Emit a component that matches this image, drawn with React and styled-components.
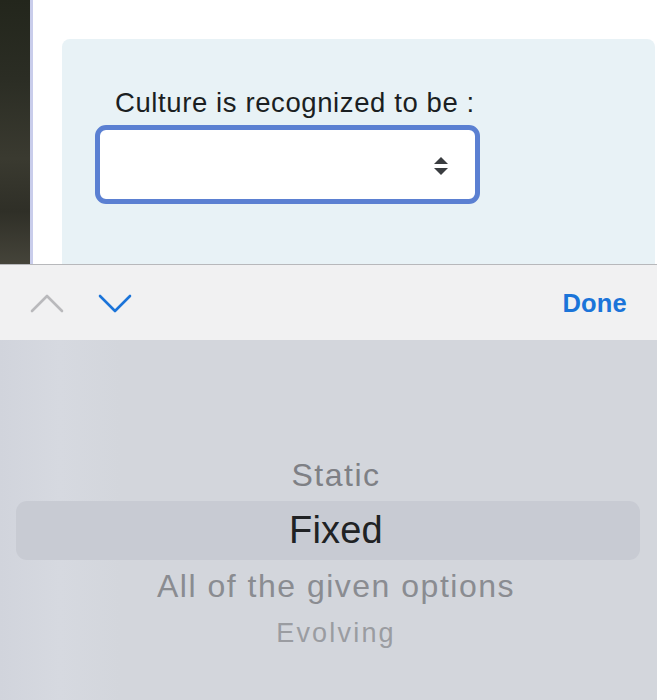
import React from "react";
import styled, { createGlobalStyle } from "styled-components";

const Global = createGlobalStyle`
  html, body { margin: 0; padding: 0; width: 657px; height: 700px; overflow: hidden; }
  body { font-family: "Liberation Sans", Arial, sans-serif; background: #fff; }
`;

const Screen = styled.div`
  width: 657px;
  height: 700px;
  display: flex;
  flex-direction: column;
  overflow: hidden;
`;

const WebArea = styled.div`
  height: 264px;
  display: flex;
  overflow: hidden;
  flex: none;
`;

const PhotoStrip = styled.div`
  width: 30px;
  flex: none;
  background: linear-gradient(180deg, #23261c 0%, #2b2d24 30%, #3a3a30 60%, #2f2f27 80%, #45443a 100%);
`;

const Rule = styled.div`
  width: 3px;
  flex: none;
  background: #c9cdeb;
`;

const Content = styled.div`
  flex: 1;
  background: #fff;
  padding: 39px 2px 0 29px;
`;

const Card = styled.div`
  background: #e8f2f6;
  border-radius: 8px 8px 0 0;
  height: 260px;
  padding: 48px 0 0 33px;
  box-sizing: border-box;
`;

const Label = styled.div`
  font-size: 27.5px;
  color: #1b1f22;
  line-height: 31px;
  margin-left: 20px;
  letter-spacing: 0.6px;
  white-space: nowrap;
`;

const Select = styled.div`
  margin-top: 7px;
  width: 385px;
  height: 79px;
  box-sizing: border-box;
  border: 5px solid #5b80d2;
  border-radius: 11px;
  background: #fff;
  display: flex;
  align-items: center;
  justify-content: flex-end;
  padding-right: 27px;
  padding-top: 2px;
`;

const AccessoryBar = styled.div`
  flex: none;
  height: 76px;
  background: #f1f1f2;
  border-top: 1px solid #b7b8bb;
  display: flex;
  align-items: center;
  padding: 2px 30px 0 30px;
  box-sizing: border-box;
`;

const NavButton = styled.div`
  display: flex;
  align-items: center;
  margin-top: -2px;
  margin-right: ${(p) => p.$gap || 0}px;
`;

const Done = styled.div`
  margin-left: auto;
  font-family: "Liberation Sans", Arial, sans-serif;
  font-weight: 700;
  font-size: 25.5px;
  color: #1b74d9;
  letter-spacing: 0.2px;
`;

const Picker = styled.div`
  flex: 1;
  background: linear-gradient(90deg, #d1d4dc 0px, #d6d9e0 60px, #d3d6dc 120px, #d3d6dc 100%);
  display: flex;
  flex-direction: column;
  align-items: stretch;
  padding: 110px 17px 0 16px;
`;

const Item = styled.div`
  text-align: center;
  font-family: "Liberation Sans", Arial, sans-serif;
  padding-left: 16px;
  font-size: ${(p) => p.$size}px;
  color: ${(p) => p.$color};
  height: ${(p) => p.$h}px;
  line-height: ${(p) => p.$h}px;
  letter-spacing: ${(p) => p.$ls || 0}px;
  white-space: nowrap;
`;

const Selected = styled(Item)`
  background: #c8cbd3;
  border-radius: 11px;
`;

const Chevron = ({ up, color }) => (
  <svg width="34" height="20" viewBox="0 0 34 20" fill="none">
    <path
      d={up ? "M2 18 L17 3 L32 18" : "M2 3 L17 18 L32 3"}
      stroke={color}
      strokeWidth="2.6"
      strokeLinecap="round"
      strokeLinejoin="round"
    />
  </svg>
);

const UpDown = () => (
  <svg width="14" height="20" viewBox="0 0 14 20">
    <path d="M7 1 L14 8 L0 8 Z" fill="#3a3d40" />
    <path d="M7 19 L14 12 L0 12 Z" fill="#3a3d40" />
  </svg>
);

export default function App() {
  return (
    <>
      <Global />
      <Screen>
        <WebArea>
          <PhotoStrip />
          <Rule />
          <Content>
            <Card>
              <Label>Culture is recognized to be :</Label>
              <Select>
                <UpDown />
              </Select>
            </Card>
          </Content>
        </WebArea>
        <AccessoryBar>
          <NavButton $gap={34}>
            <Chevron up color="#b9b9bc" />
          </NavButton>
          <NavButton>
            <Chevron color="#1b74d9" />
          </NavButton>
          <Done>Done</Done>
        </AccessoryBar>
        <Picker>
          <Item $size={32} $color="#7e8085" $h={51} $ls={1.5}>Static</Item>
          <Selected $size={38} $color="#202224" $h={59} $ls={0.2}>Fixed</Selected>
          <Item $size={32} $color="#8a8c91" $h={52} $ls={1.5}>All of the given options</Item>
          <Item $size={27} $color="#9a9ca1" $h={42} $ls={2.2}>Evolving</Item>
        </Picker>
      </Screen>
    </>
  );
}
